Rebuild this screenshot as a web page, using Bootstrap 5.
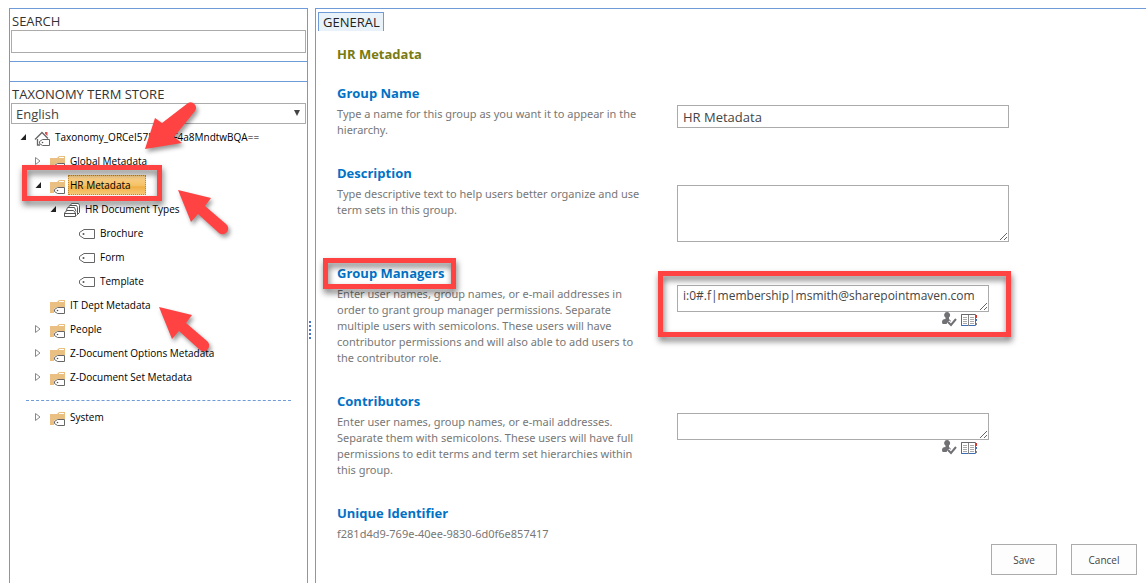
<!DOCTYPE html>
<html lang="en">
<head>
<meta charset="utf-8">
<meta name="viewport" content="width=device-width, initial-scale=1">
<title>Term Store Management</title>
<link href="https://cdn.jsdelivr.net/npm/bootstrap@5.3.0/dist/css/bootstrap.min.css" rel="stylesheet">
<style>
  :root { --line: #6f9cd8; --ctl: #ababab; --alert: #ff4343; }
  body { font-family: "Open Sans", "Noto Sans", sans-serif; font-size: 12px; line-height: 16px; color: #222; background: #fff; }
  .page { padding: 8px 0 0 9px; }
  .side { width: 299px; border: 1px solid var(--line); border-bottom: 0; }
  .splitter { width: 7px; display: flex; flex-direction: column; align-items: flex-start; padding: 313px 0 0 1px; gap: 2px; }
  .splitter i { width: 2px; height: 2px; background: #4472c4; }
  .main { border: 1px solid var(--line); border-width: 1px 0 0 1px; min-width: 0; }
  .cap { font-size: 13px; line-height: 17px; display: block; padding: 4px 1px 0; color: #333; }
  .box { padding: 0 1px; }
  .search-box { border-bottom: 1px solid var(--line); padding-bottom: 8px; }
  .strip { height: 20px; border-bottom: 1px solid var(--line); }
  .field { border: 1px solid var(--ctl); border-radius: 0; padding: 0 5px; font-size: 13px; line-height: 18px; color: #444; background-color: #fff; display: block; width: 100%; max-width: 332px; }
  .field-short { height: 23px; }
  .field-area { height: 57px; }
  .field-people { max-width: 312px; height: 27px; padding-top: 1px; font-size: 12px; overflow: hidden; }
  .lang { height: 21px; appearance: none; padding: 0 4px; }
  .lang-wrap::after { content: ""; position: absolute; right: 6px; top: 7px; border: 3px solid transparent; border-top: 6px solid #444; border-bottom: 0; }
  .tree, .tree ul { list-style: none; margin: 0; padding: 0; }
  .tree { padding: 1px 0 0 8px; font-size: 10px; color: #000; }
  .tree ul { padding-left: 15px; }
  .node { display: flex; align-items: center; height: 24px; white-space: nowrap; }
  .twist { width: 16px; height: 8px; flex: none; }
  .ico { width: 17px; height: 16px; flex: none; margin-right: 3px; position: relative; top: 2px; }
  .node a { color: inherit; text-decoration: none; padding: 0 1px; }
  .node a.chosen { border: 1px dotted #c98a2b; background: linear-gradient(#fbd491, #f6c063 55%, #f0af43 60%, #f7c878); padding: 1px 14px 1px 1px; margin-left: -1px; }
  .tree-rule { border-top: 1px dashed var(--line); margin: 11px 16px 4px 8px; }
  .tab { display: inline-block; border: 1px solid var(--line); border-bottom: 0; background: #e9f2f8; margin: 3px 0 0 2px; padding: 0 3px 0 4px; font-size: 13px; line-height: 18px; color: #222; text-decoration: none; }
  .form-body { padding: 13px 9px 8px 21px; }
  .head { font-size: 13px; line-height: 20px; font-weight: 700; color: #0072c6; margin: 0; }
  .head-olive { color: #7a7a12; margin-bottom: 19px; }
  .setting { display: grid; grid-template-columns: minmax(0, 340px) minmax(0, 1fr); padding-bottom: 21px; }
  .setting > :first-child { padding: 0 28px 4px 0; }
  .setting > :last-child { padding-top: 22px; }
  .note { margin: 3px 0 0; color: #777; font-family: "Noto Sans", "Open Sans", sans-serif; font-size: 11px; }
  .tools { max-width: 312px; padding: 0 11px 0 0; }
  .tools button { border: 0; background: none; padding: 0; line-height: 0; }
  .act { width: 66px; height: 31px; border: 1px solid var(--ctl); border-radius: 0; background: #fdfdfd; color: #444; font-size: 10px; padding: 0; }
  .actions { gap: 14px; }
  .ring { position: absolute; border: 5px solid var(--alert); filter: drop-shadow(1px 4px 3px rgba(0,0,0,.55)); pointer-events: none; }
  .ring-node { left: -11px; top: -8px; width: 140px; height: 36px; }
  .ring-label { inset: -5px -12px -6px -14px; }
  .ring-people { left: -19px; top: 8px; width: 353px; height: 66px; }
  .arrows { position: absolute; left: -10px; top: -9px; pointer-events: none; filter: drop-shadow(2px 3px 2px rgba(0,0,0,.4)); }
</style>
</head>
<body>
<svg width="0" height="0" class="position-absolute" aria-hidden="true">
  <symbol id="open" viewBox="0 0 16 8"><path d="M2.500 7H8V1z" fill="#222"/></symbol>
  <symbol id="shut" viewBox="0 0 16 8"><path d="M2.500 .5v7L7 4z" fill="#fff" stroke="#888"/></symbol>
  <symbol id="folder" viewBox="0 0 17 16"><path d="M1 3h7l2-2h6v7H8l-3 2v4H1z" fill="#eabf82"/><path d="M10 2.500h5" stroke="#fff"/><path d="M8.500 8.500H15.500v6H8.500L5.500 12.500v-2z" fill="#fff" stroke="#666"/><circle cx="8.500" cy="11.500" r=".8" fill="#555"/></symbol>
  <symbol id="tag" viewBox="0 0 17 16"><path d="M5 2.500H15.500v9H5L.5 8.500v-3z" fill="#fff" stroke="#666" stroke-linejoin="round"/><circle cx="4.500" cy="7" r="1" fill="#555"/></symbol>
  <symbol id="house" viewBox="0 0 17 16"><path d="M1 8.500L8 1.500l6 6M3.500 8v6H6" fill="none" stroke="#666" stroke-width="1.300"/><path d="M11 1h2.500v4L11 2.700z" fill="#d9534f"/><path d="M8.500 8.500H15.500v6H8.500L5.500 12.500v-2z" fill="#fff" stroke="#666"/><circle cx="8.500" cy="11.500" r=".8" fill="#555"/></symbol>
  <symbol id="stack" viewBox="0 0 17 16"><g fill="#fff" stroke="#555"><path d="M6 3.500L7.500.5h7l1 2v7l-2 2"/><path d="M4 5.500l1.500-3h7l1 2v7l-1 1"/><path d="M2 8.500l1.500-4h7l1.500 4"/><path d="M.5 10L3 7.500h6.500L11.500 10v3.500H.5z"/><path d="M1 10.500h10"/></g></symbol>
  <symbol id="check" viewBox="0 0 15 15"><path d="M5 0a3 3 0 0 1 2 5.300V7l2 2-2 3H1Q0 12 0 10q0-3 3.500-3V5.500A3 3 0 0 1 5 0z" fill="#717175"/><path d="M6 10l3 3 5-6" fill="none" stroke="#fff" stroke-width="4"/><path d="M6 10l3 3 5-6" fill="none" stroke="#717175" stroke-width="2"/></symbol>
  <symbol id="book" viewBox="0 0 17 14"><path d="M.5 1.500h14v11H.5z" fill="#fff" stroke="#6a6a70"/><path d="M.5 1.500v11H7M9 12.500h5" fill="none" stroke="#3f6db5"/><path d="M7.500 2v11" stroke="#888"/><path d="M2 4.500h4M2 6.500h4M2 8.500h4M2 10.500h4M9 4.500h4M9 6.500h4M9 8.500h4M9 10.500h4" stroke="#aaa"/><path d="M15 2h1v3h-1z" fill="#d9342b"/><path d="M15 6h1v2h-1z" fill="#3f6db5"/><path d="M15 10h1v2h-1z" fill="#888"/></symbol>
</svg>

<div class="page d-flex min-vh-100">
  <aside class="side flex-shrink-0 position-relative">
    <div class="box search-box">
      <label class="cap" for="q">SEARCH</label>
      <input id="q" type="text" class="field field-short mw-100">
    </div>
    <div class="strip"></div>
    <div class="box">
      <label class="cap" for="lang">TAXONOMY TERM STORE</label>
      <div class="lang-wrap position-relative">
        <select id="lang" class="field lang mw-100"><option>English</option></select>
      </div>
    </div>
    <ul class="tree">
      <li>
        <div class="node"><svg class="twist"><use href="#open"/></svg><svg class="ico"><use href="#house"/></svg><a href="#">Taxonomy_ORCeI57BuYoF4a8MndtwBQA==</a></div>
        <ul>
          <li><div class="node"><svg class="twist"><use href="#shut"/></svg><svg class="ico"><use href="#folder"/></svg><a href="#">Global Metadata</a></div></li>
          <li>
            <div class="node position-relative"><svg class="twist"><use href="#open"/></svg><svg class="ico"><use href="#folder"/></svg><a href="#" class="chosen">HR Metadata</a><span class="ring ring-node"></span></div>
            <ul>
              <li>
                <div class="node"><svg class="twist"><use href="#open"/></svg><svg class="ico"><use href="#stack"/></svg><a href="#">HR Document Types</a></div>
                <ul>
                  <li><div class="node"><svg class="ico ms-3"><use href="#tag"/></svg><a href="#">Brochure</a></div></li>
                  <li><div class="node"><svg class="ico ms-3"><use href="#tag"/></svg><a href="#">Form</a></div></li>
                  <li><div class="node"><svg class="ico ms-3"><use href="#tag"/></svg><a href="#">Template</a></div></li>
                </ul>
              </li>
            </ul>
          </li>
          <li><div class="node"><svg class="ico ms-3"><use href="#folder"/></svg><a href="#">IT Dept Metadata</a></div></li>
          <li><div class="node"><svg class="twist"><use href="#shut"/></svg><svg class="ico"><use href="#folder"/></svg><a href="#">People</a></div></li>
          <li><div class="node"><svg class="twist"><use href="#shut"/></svg><svg class="ico"><use href="#folder"/></svg><a href="#">Z-Document Options Metadata</a></div></li>
          <li><div class="node"><svg class="twist"><use href="#shut"/></svg><svg class="ico"><use href="#folder"/></svg><a href="#">Z-Document Set Metadata</a></div></li>
        </ul>
        <div class="tree-rule"></div>
        <ul>
          <li><div class="node"><svg class="twist"><use href="#shut"/></svg><svg class="ico"><use href="#folder"/></svg><a href="#">System</a></div></li>
        </ul>
      </li>
    </ul>
    <svg class="arrows" width="250" height="360" viewBox="0 0 250 360" fill="#ff4343" aria-hidden="true">
      <path d="M145 149L155 118 162 123 188 103A5.500 5.500 0 0 1 195 111L174 137 182 143z"/>
      <path id="arrow" d="M178 190L211 198 205 206 226 224A5.500 5.500 0 0 1 219 233L198 214 191 222z"/>
      <use href="#arrow" x="-19" y="117"/>
    </svg>
  </aside>

  <div class="splitter flex-shrink-0"><i></i><i></i><i></i><i></i><i></i></div>

  <main class="main flex-grow-1 d-flex flex-column">
    <div><a href="#" class="tab">GENERAL</a></div>
    <form class="form-body flex-grow-1 d-flex flex-column">
      <h1 class="head head-olive">HR Metadata</h1>
      <div class="setting">
        <div><label class="head" for="gname">Group Name</label><p class="note">Type a name for this group as you want it to appear in the hierarchy.</p></div>
        <div><input id="gname" type="text" class="field field-short" value="HR Metadata"></div>
      </div>
      <div class="setting">
        <div><label class="head" for="desc">Description</label><p class="note">Type descriptive text to help users better organize and use term sets in this group.</p></div>
        <div><textarea id="desc" class="field field-area"></textarea></div>
      </div>
      <div class="setting">
        <div><label class="head position-relative" for="mgr">Group Managers<span class="ring ring-label"></span></label><p class="note">Enter user names, group names, or e-mail addresses in order to grant group manager permissions. Separate multiple users with semicolons. These users will have contributor permissions and will also able to add users to the contributor role.</p></div>
        <div class="position-relative"><textarea id="mgr" class="field field-people">i:0#.f|membership|msmith@sharepointmaven.com</textarea>
          <div class="tools d-flex justify-content-end gap-1"><button type="button" aria-label="Check names"><svg width="15" height="15"><use href="#check"/></svg></button><button type="button" aria-label="Browse"><svg width="17" height="14"><use href="#book"/></svg></button></div>
          <span class="ring ring-people"></span>
        </div>
      </div>
      <div class="setting">
        <div><label class="head" for="con">Contributors</label><p class="note">Enter user names, group names, or e-mail addresses. Separate them with semicolons. These users will have full permissions to edit terms and term set hierarchies within this group.</p></div>
        <div><textarea id="con" class="field field-people"></textarea>
          <div class="tools d-flex justify-content-end gap-1"><button type="button" aria-label="Check names"><svg width="15" height="15"><use href="#check"/></svg></button><button type="button" aria-label="Browse"><svg width="17" height="14"><use href="#book"/></svg></button></div>
        </div>
      </div>
      <h2 class="head">Unique Identifier</h2>
      <p class="note">f281d4d9-769e-40ee-9830-6d0f6e857417</p>
      <div class="actions d-flex justify-content-end mt-auto"><button type="button" class="act">Save</button><button type="button" class="act">Cancel</button></div>
    </form>
  </main>
</div>
<script src="https://cdn.jsdelivr.net/npm/bootstrap@5.3.0/dist/js/bootstrap.bundle.min.js"></script>
</body>
</html>
